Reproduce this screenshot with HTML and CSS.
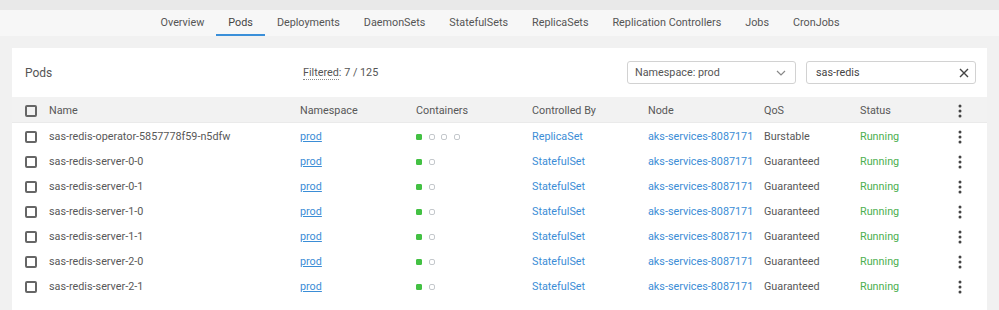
FILE: index.html
```html
<!DOCTYPE html>
<html>
<head>
<meta charset="utf-8">
<link rel="stylesheet" href="styles.css">
</head>
<body>
<div class="topstrip"></div>
<nav class="tabs">
  <a class="tab">Overview</a>
  <a class="tab active">Pods</a>
  <a class="tab">Deployments</a>
  <a class="tab">DaemonSets</a>
  <a class="tab">StatefulSets</a>
  <a class="tab">ReplicaSets</a>
  <a class="tab">Replication Controllers</a>
  <a class="tab">Jobs</a>
  <a class="tab">CronJobs</a>
</nav>
<section class="card">
  <header class="card-head">
    <div class="title">Pods</div>
    <div class="filtered"><span class="dotted">Filtered</span>: 7 / 125</div>
    <div class="select">
      <span>Namespace: prod</span>
      <svg class="chev" width="10" height="6" viewBox="0 0 10 6"><path d="M1 1l4 4 4-4" fill="none" stroke="#888" stroke-width="1.2"/></svg>
    </div>
    <div class="search">
      <span>sas-redis</span>
      <svg class="clear" width="10" height="10" viewBox="0 0 10 10"><path d="M1 1l8 8M9 1l-8 8" stroke="#444" stroke-width="1.4"/></svg>
    </div>
  </header>
  <div class="row head">
    <span class="cb"></span><span>Name</span><span>Namespace</span><span>Containers</span><span>Controlled By</span><span>Node</span><span>QoS</span><span>Status</span>
    <span class="kebab"><svg width="4" height="14" viewBox="0 0 4 14"><circle cx="2" cy="2" r="1.5"/><circle cx="2" cy="7" r="1.5"/><circle cx="2" cy="12" r="1.5"/></svg></span>
  </div>
  <div class="row">
    <span class="cb"></span><span>sas-redis-operator-5857778f59-n5dfw</span><span><a class="ns">prod</a></span>
    <span class="dots"><i class="on"></i><i></i><i></i><i></i></span>
    <span class="link">ReplicaSet</span><span class="link">aks-services-8087171</span><span>Burstable</span><span class="ok">Running</span>
    <span class="kebab"><svg width="4" height="14" viewBox="0 0 4 14"><circle cx="2" cy="2" r="1.5"/><circle cx="2" cy="7" r="1.5"/><circle cx="2" cy="12" r="1.5"/></svg></span>
  </div>
  <div class="row">
    <span class="cb"></span><span>sas-redis-server-0-0</span><span><a class="ns">prod</a></span>
    <span class="dots"><i class="on"></i><i></i></span>
    <span class="link">StatefulSet</span><span class="link">aks-services-8087171</span><span>Guaranteed</span><span class="ok">Running</span>
    <span class="kebab"><svg width="4" height="14" viewBox="0 0 4 14"><circle cx="2" cy="2" r="1.5"/><circle cx="2" cy="7" r="1.5"/><circle cx="2" cy="12" r="1.5"/></svg></span>
  </div>
  <div class="row">
    <span class="cb"></span><span>sas-redis-server-0-1</span><span><a class="ns">prod</a></span>
    <span class="dots"><i class="on"></i><i></i></span>
    <span class="link">StatefulSet</span><span class="link">aks-services-8087171</span><span>Guaranteed</span><span class="ok">Running</span>
    <span class="kebab"><svg width="4" height="14" viewBox="0 0 4 14"><circle cx="2" cy="2" r="1.5"/><circle cx="2" cy="7" r="1.5"/><circle cx="2" cy="12" r="1.5"/></svg></span>
  </div>
  <div class="row">
    <span class="cb"></span><span>sas-redis-server-1-0</span><span><a class="ns">prod</a></span>
    <span class="dots"><i class="on"></i><i></i></span>
    <span class="link">StatefulSet</span><span class="link">aks-services-8087171</span><span>Guaranteed</span><span class="ok">Running</span>
    <span class="kebab"><svg width="4" height="14" viewBox="0 0 4 14"><circle cx="2" cy="2" r="1.5"/><circle cx="2" cy="7" r="1.5"/><circle cx="2" cy="12" r="1.5"/></svg></span>
  </div>
  <div class="row">
    <span class="cb"></span><span>sas-redis-server-1-1</span><span><a class="ns">prod</a></span>
    <span class="dots"><i class="on"></i><i></i></span>
    <span class="link">StatefulSet</span><span class="link">aks-services-8087171</span><span>Guaranteed</span><span class="ok">Running</span>
    <span class="kebab"><svg width="4" height="14" viewBox="0 0 4 14"><circle cx="2" cy="2" r="1.5"/><circle cx="2" cy="7" r="1.5"/><circle cx="2" cy="12" r="1.5"/></svg></span>
  </div>
  <div class="row">
    <span class="cb"></span><span>sas-redis-server-2-0</span><span><a class="ns">prod</a></span>
    <span class="dots"><i class="on"></i><i></i></span>
    <span class="link">StatefulSet</span><span class="link">aks-services-8087171</span><span>Guaranteed</span><span class="ok">Running</span>
    <span class="kebab"><svg width="4" height="14" viewBox="0 0 4 14"><circle cx="2" cy="2" r="1.5"/><circle cx="2" cy="7" r="1.5"/><circle cx="2" cy="12" r="1.5"/></svg></span>
  </div>
  <div class="row">
    <span class="cb"></span><span>sas-redis-server-2-1</span><span><a class="ns">prod</a></span>
    <span class="dots"><i class="on"></i><i></i></span>
    <span class="link">StatefulSet</span><span class="link">aks-services-8087171</span><span>Guaranteed</span><span class="ok">Running</span>
    <span class="kebab"><svg width="4" height="14" viewBox="0 0 4 14"><circle cx="2" cy="2" r="1.5"/><circle cx="2" cy="7" r="1.5"/><circle cx="2" cy="12" r="1.5"/></svg></span>
  </div>
</section>
</body>
</html>
```

FILE: styles.css
```css
* { box-sizing: border-box; }
html, body { margin: 0; padding: 0; }
body {
  background: #f1f1f1;
  font-family: Roboto, "Liberation Sans", Arial, sans-serif;
  font-size: 10.8px;
  color: #555;
  width: 999px;
  height: 310px;
  overflow: hidden;
}
.topstrip { height: 10px; background: #e9e9e9; }
.tabs {
  height: 26px;
  background: #f7f7f7;
  display: flex;
  justify-content: center;
  padding-left: 1px;
}
.tab {
  padding: 2px 12px 0;
  line-height: 22px;
  height: 26px;
  font-size: 10.8px;
  color: #555;
  border-bottom: 2px solid transparent;
}
.tab.active { border-bottom-color: #3a8fd9; color: #444; }
.card {
  margin: 12px 12px 0;
  background: #fff;
  height: 262px;
}
.card-head {
  height: 49px;
  display: flex;
  align-items: center;
  padding: 0 11px 0 13px;
}
.title { font-size: 12px; color: #555; width: 278px; }
.filtered { font-size: 10.8px; color: #555; flex: 1; }
.dotted { border-bottom: 1px dotted #888; }
.select, .search {
  height: 23px;
  border: 1px solid #d2d2d2;
  border-radius: 3px;
  display: flex;
  align-items: center;
  justify-content: space-between;
  font-size: 10.8px;
  color: #555;
}
.select { width: 169px; padding: 0 9px 0 7px; margin-right: 10px; }
.search { width: 170px; padding: 0 6px 0 9px; color: #444; }
.row {
  display: grid;
  grid-template-columns: 24px 251px 116px 116px 116px 116px 96px 92px 1fr;
  align-items: center;
  height: 25px;
  padding-left: 13px;
  padding-top: 2px;
  font-size: 10.8px;
  color: #585858;
  white-space: nowrap;
}
.row.head { background: #f2f2f2; border-bottom: 1px solid #eaeaea; height: 26px; }
.cb {
  width: 12px; height: 12px;
  border: 2px solid #666;
  border-radius: 2px;
}
.ns { color: #3b8dd6; text-decoration: underline; }
.link { color: #3b8dd6; }
.ok { color: #4caf50; }
.dots { display: flex; gap: 6.5px; align-items: center; }
.dots i {
  width: 6px; height: 6px;
  border: 1px solid #c4c8cc;
  border-radius: 2px;
  display: block;
}
.dots i.on { background: #43c143; border-color: #43c143; border-radius: 1px; }
.kebab { display: flex; padding-left: 6px; }
.kebab svg { fill: #444; }
```
